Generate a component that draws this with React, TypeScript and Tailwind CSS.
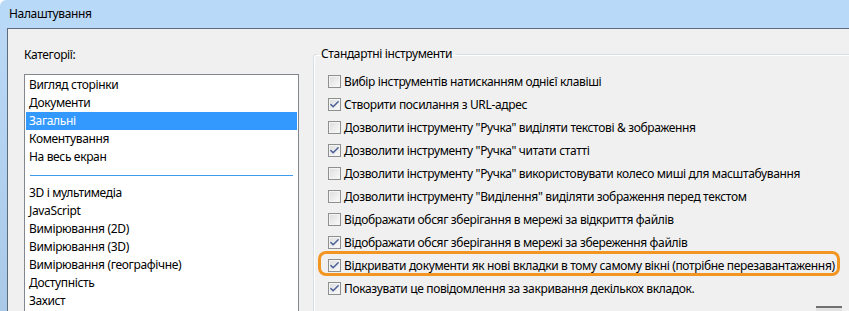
import { Check } from 'lucide-react';

const categories = ['Вигляд сторінки', 'Документи', 'Загальні', 'Коментування', 'На весь екран'];
const moreCategories = [
  '3D і мультимедіа',
  'JavaScript',
  'Вимірювання (2D)',
  'Вимірювання (3D)',
  'Вимірювання (географічне)',
  'Доступність',
  'Захист',
];

const options = [
  { label: 'Вибір інструментів натисканням однієї клавіші', checked: false },
  { label: 'Створити посилання з URL-адрес', checked: true },
  { label: 'Дозволити інструменту "Ручка" виділяти текстові & зображення', checked: false },
  { label: 'Дозволити інструменту "Ручка" читати статті', checked: true },
  { label: 'Дозволити інструменту "Ручка" використовувати колесо миші для масштабування', checked: false },
  { label: 'Дозволити інструменту "Виділення" виділяти зображення перед текстом', checked: false },
  { label: 'Відображати обсяг зберігання в мережі за відкриття файлів', checked: false },
  { label: 'Відображати обсяг зберігання в мережі за збереження файлів', checked: true },
  { label: 'Відкривати документи як нові вкладки в тому самому вікні (потрібне перезавантаження)', checked: true, highlight: true },
  { label: 'Показувати це повідомлення за закривання декількох вкладок.', checked: true },
];

function CheckBox({ checked }: { checked: boolean }) {
  return (
    <span className="flex h-[13px] w-[13px] shrink-0 items-center justify-center border border-[#8e8f8f] bg-gradient-to-br from-[#dcdcdc] to-[#fbfbfb] shadow-[inset_0_0_0_1px_#f4f4f4]">
      {checked && <Check className="h-[11px] w-[11px] text-[#4a5f97]" strokeWidth={3.2} />}
    </span>
  );
}

export default function App() {
  return (
    <div
      className="flex h-[311px] w-[849px] flex-col overflow-hidden bg-white text-[12px] tracking-[-0.35px] text-black"
      style={{ fontFamily: '"Noto Sans", "Open Sans", sans-serif' }}
    >
      {/* Title bar */}
      <div className="flex h-[28px] shrink-0 items-center rounded-tl-[6px] bg-[#b9d9f8] pl-[9px]">
        Налаштування
      </div>

      <div className="flex flex-1">
        {/* Window frame */}
        <div className="w-[7px] shrink-0 bg-gradient-to-b from-[#bad8f6] to-[#a9c8e8]" />

        {/* Client area */}
        <div className="flex flex-1 border-l border-t border-[#5d6c7c] bg-[#f0f0f0] pl-[16px] pt-[16px]">
          {/* Categories */}
          <div className="flex w-[275px] shrink-0 flex-col">
            <div className="mt-[2px] h-[16px] leading-[16px]">Категорії:</div>
            <div className="mt-[11px] flex-1 border border-[#828790] bg-white p-[1px]">
              {categories.map((c, i) => (
                <div
                  key={c}
                  className={
                    i === 2
                      ? 'h-[18px] bg-[#3399ff] px-[3px] leading-[18px] text-white'
                      : 'h-[18px] px-[3px] leading-[18px]'
                  }
                >
                  {c}
                </div>
              ))}
              <div className="flex h-[18px] items-center px-[4px]">
                <div className="h-[1px] w-full bg-[#3d9bea]" />
              </div>
              {moreCategories.map((c) => (
                <div key={c} className="h-[18px] px-[3px] leading-[18px]">
                  {c}
                </div>
              ))}
            </div>
          </div>

          {/* Standard tools */}
          <fieldset className="ml-[14px] mt-[1px] w-[560px] shrink-0 rounded-[3px] border border-[#d5dfe5] pb-[4px] shadow-[inset_1px_1px_0_#ffffff]">
            <legend className="ml-[3px] px-[4px] leading-[16px]">Стандартні інструменти</legend>
            <div className="flex flex-col pl-[14px] pt-[8px]">
              {options.map((o) => (
                <div key={o.label} className="relative flex h-[23px] items-center gap-[3px]">
                  {o.highlight && (
                    <span className="absolute left-[-10px] top-[-3px] h-[25px] w-[522px] rounded-[8px] border-[3px] border-[#f39621]" />
                  )}
                  <CheckBox checked={o.checked} />
                  <span className="whitespace-nowrap">{o.label}</span>
                </div>
              ))}
              <div className="ml-[488px] mt-[6px] h-[20px] w-[26px] border-t-2 border-[#707070] bg-[#e2e2e2]" />
            </div>
          </fieldset>
        </div>
      </div>
    </div>
  );
}
